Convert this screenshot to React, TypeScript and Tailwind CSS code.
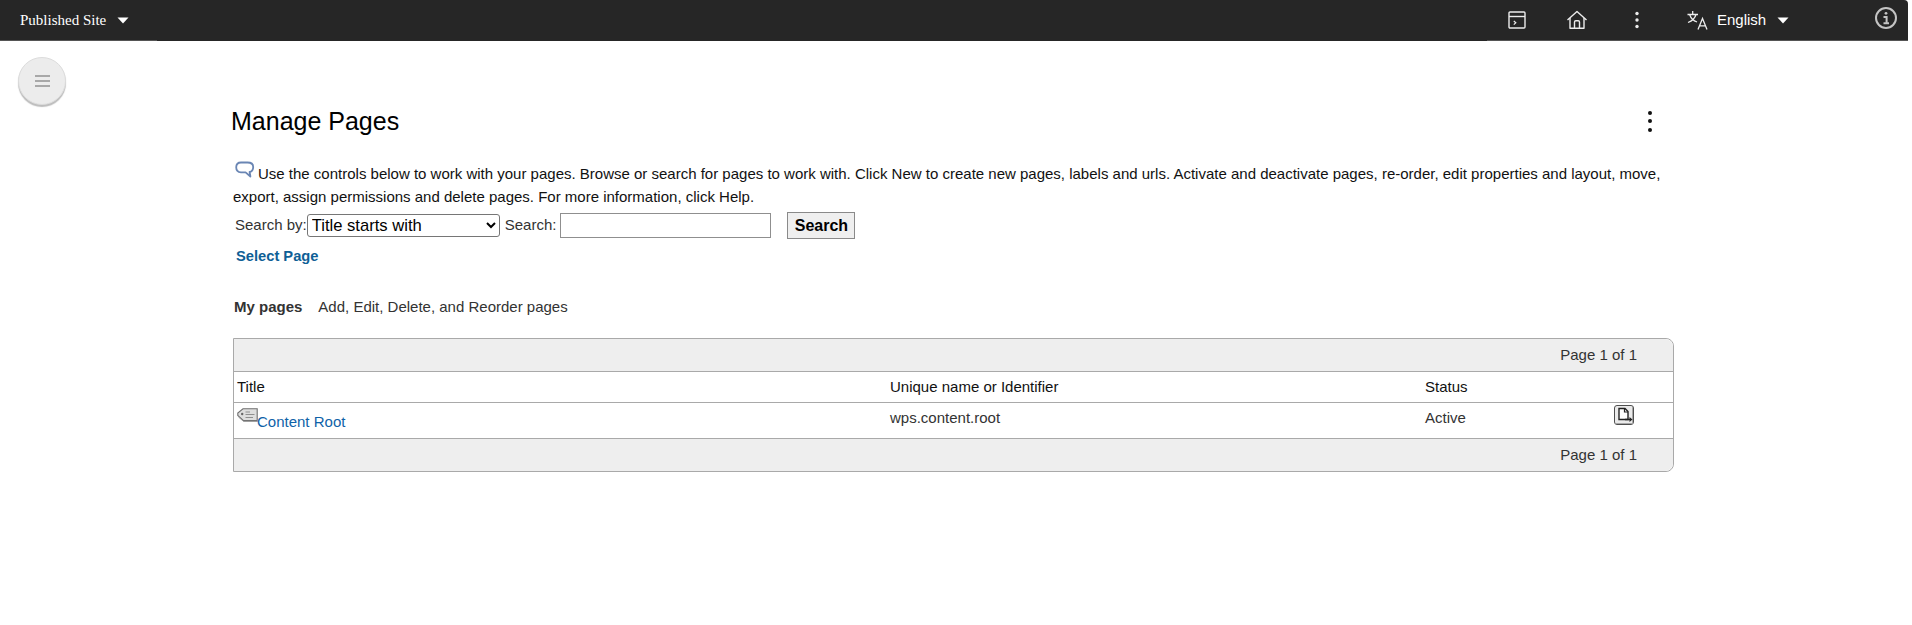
import React from "react";

const sans = "font-['Liberation_Sans',Arial,sans-serif]";

function Comment() {
  return (
    <svg width="20" height="19" viewBox="0 0 20 19" className="absolute left-[4px] top-[-1px]" fill="none">
      <path d="M6 1.5 H12.5 Q18.2 1.5 18.2 6 Q18.2 10.4 14.6 11 L15.4 15.5 L10.6 11.4 H6 Q1.2 11 1.2 6.2 Q1.2 1.5 6 1.5 Z" stroke="#6a86b4" strokeWidth="1.8" strokeLinejoin="round" />
    </svg>
  );
}

function TagIcon() {
  return (
    <svg width="21" height="14" viewBox="0 0 21 14" className="shrink-0">
      <path d="M6 0.8 H20.2 V12.6 H6.5 L0.8 7.5 V5 Z" fill="#dedede" stroke="#6f6f6f" strokeWidth="1.1" />
      <path d="M1.5 9 L6.5 13.4 H20.8" fill="none" stroke="#9a9a9a" strokeWidth="1" />
      <circle cx="5.2" cy="6" r="1.2" fill="#666" />
      <path d="M8.5 4 H13 M8.5 6.5 H17.5 M8.5 9.5 H16" stroke="#8f8f8f" strokeWidth="1.1" />
    </svg>
  );
}

function MoveIcon() {
  return (
    <svg width="21" height="20" viewBox="0 0 21 20">
      <rect x="0.5" y="0.5" width="19" height="19" rx="2.5" fill="#ebebeb" stroke="#4f4f4f" />
      <path d="M1.5 18.5 H18.5 V2" fill="none" stroke="#a8a8a8" strokeWidth="1" />
      <path d="M5 3.5 H11 L14 6.5 V14.5 H5 Z" fill="#fff" stroke="#222" strokeWidth="1.4" />
      <path d="M10.5 3.5 V7 H14" fill="none" stroke="#222" strokeWidth="1.2" />
      <path d="M11 14.5 H16" stroke="#222" strokeWidth="1.5" />
      <path d="M15.5 12 L18.5 14.5 L15.5 17 Z" fill="#222" />
    </svg>
  );
}

function PageBar({ last }: { last?: boolean }) {
  return (
    <div className={`flex items-center justify-end h-[33px] pr-[36px] bg-[#eeeeee] text-[15px] text-[#333333] ${last ? "border-t border-[#a9a9a9] rounded-br-[8px]" : "border-b border-[#a9a9a9] rounded-tr-[8px]"}`}>
      Page 1 of 1
    </div>
  );
}

export default function App() {
  return (
    <div className={`${sans} relative w-[1912px] h-[625px] overflow-hidden bg-white`}>
      <header className="h-[41px] w-[1908px] rounded-tr-[4px] bg-[#262626] flex items-center text-white">
        <div className="flex items-center pl-[20px] w-[157px] h-full border-b border-[#555555]">
          <span className="font-['Liberation_Serif',serif] text-[15px]">Published Site</span>
          <svg width="12" height="7" viewBox="0 0 12 7" className="ml-[11px]"><path d="M0.5 0.5 H11.5 L6 6.5 Z" fill="#fff" /></svg>
        </div>
        <div className="flex-1" />
        <div className="flex items-center h-full w-[421px] relative border-b border-[#555555]">
          <svg width="20" height="20" viewBox="0 0 20 20" className="ml-[20px]" fill="none" stroke="#ececec" strokeWidth="1.4">
            <rect x="2" y="2" width="16" height="16" rx="1" />
            <path d="M2 6.5 H18" />
            <path d="M6.8 11 L8.8 12.8 L6.8 14.6" strokeWidth="1.2" />
          </svg>
          <svg width="22" height="20" viewBox="0 0 22 20" className="ml-[39px]" fill="none" stroke="#ececec" strokeWidth="1.4" strokeLinejoin="round">
            <path d="M1.5 10 L11 1.5 L20.5 10" />
            <path d="M4 8 V18.2 H18 V8" />
            <path d="M8.5 18.2 V12 Q8.5 10.8 9.8 10.8 H12.2 Q13.5 10.8 13.5 12 V18.2" />
          </svg>
          <svg width="4" height="18" viewBox="0 0 4 18" className="ml-[47px]" fill="#ececec">
            <circle cx="2" cy="2.5" r="1.7" /><circle cx="2" cy="9" r="1.7" /><circle cx="2" cy="15.5" r="1.7" />
          </svg>
          <svg width="21" height="20" viewBox="0 0 21 20" className="ml-[48px] -mt-[1px]" fill="none" stroke="#ececec" strokeWidth="1.3">
            <path d="M0.5 4.5 H11 M5.7 1 V4.5 M9 4.5 Q7.5 10 1 12.5 M2.8 5 Q4.5 10 10 12" />
            <path d="M11 19.5 L15.5 8.5 L20 19.5 M12.6 15.8 H18.4" />
          </svg>
          <span className="ml-[9px] text-[15px]">English</span>
          <svg width="12" height="7" viewBox="0 0 12 7" className="ml-[11px]"><path d="M0.5 0.5 H11.5 L6 6.5 Z" fill="#fff" /></svg>
          <svg width="24" height="24" viewBox="0 0 24 24" className="absolute left-[387px] top-[6px]" fill="none" stroke="#c4c4c4" strokeWidth="2">
            <circle cx="12" cy="12" r="10" />
            <circle cx="12" cy="7.3" r="1.4" fill="#c4c4c4" stroke="none" />
            <path d="M9.5 11 H12.6 V17 M9.5 17.2 H15" />
          </svg>
        </div>
      </header>

      <button className="absolute left-[18px] top-[57px] w-[48px] h-[48px] rounded-full bg-[#ececec] border border-[#dcdcdc] shadow-[0_2px_1px_#bdbdbd] flex flex-col items-center justify-center gap-[3px]">
        <span className="block w-[15px] h-[2px] bg-[#a8a8a8]" />
        <span className="block w-[15px] h-[2px] bg-[#a8a8a8]" />
        <span className="block w-[15px] h-[2px] bg-[#a8a8a8]" />
      </button>

      <main className="pl-[231px] w-[1680px] pt-[65px]">
        <div className="flex items-center justify-between h-[30px] pr-[27px]">
          <h1 className="text-[25px] leading-[30px] text-black">Manage Pages</h1>
          <svg width="6" height="22" viewBox="0 0 6 22" fill="#111">
            <circle cx="3" cy="3" r="2" /><circle cx="3" cy="11" r="2" /><circle cx="3" cy="20" r="2" />
          </svg>
        </div>

        <p className="relative mt-[26px] pl-[2px] w-[1440px] text-[15px] leading-[23px] text-[#111111] indent-[25px]">
          <Comment />Use the controls below to work with your pages. Browse or search for pages to work with. Click New to create new pages, labels and urls. Activate and deactivate pages, re-order, edit properties and layout, move, export, assign permissions and delete pages. For more information, click Help.
        </p>

        <div className="flex items-center mt-[4px] pl-[4px] h-[27px] text-[15px] text-[#333333]">
          <label>Search by:</label>
          <select className="w-[193px] h-[23px] border border-[#767676] rounded-[3px] bg-white text-[16.6px] text-black appearance-auto" defaultValue="t">
            <option value="t">Title starts with</option>
          </select>
          <label className="ml-[5px]">Search:</label>
          <input className="ml-[4px] w-[211px] h-[25px] border border-[#8f8f8f] bg-white" />
          <button className="ml-[16px] w-[68px] h-[27px] border border-[#8a8a8a] bg-[#efefef] text-[16px] font-bold text-black">Search</button>
        </div>

        <a className="block mt-[9px] ml-[5px] text-[14.7px] leading-[17px] font-bold text-[#0f5f96]">Select Page</a>

        <div className="flex mt-[32px] ml-[3px] text-[15px] leading-[20px] text-[#333333]">
          <b>My pages</b>
          <span className="ml-[16px]">Add, Edit, Delete, and Reorder pages</span>
        </div>

        <section className="mt-[21px] ml-[2px] w-[1441px] border border-[#a9a9a9] rounded-tr-[8px] rounded-br-[8px] text-[15px]">
          <PageBar />
          <div className="grid grid-cols-[653px_535px_1fr] h-[31px] items-center border-b border-[#a9a9a9] pl-[3px] text-[#111111]">
            <span>Title</span>
            <span>Unique name or Identifier</span>
            <span>Status</span>
          </div>
          <div className="grid grid-cols-[653px_535px_189px_1fr] h-[35px] pl-[3px] text-[#333333]">
            <span className="flex items-start pt-[5px] text-[#0f62a8]">
              <TagIcon />
              <span className="mt-[3px] -ml-[1px]">Content Root</span>
            </span>
            <span className="pt-[4px]">wps.content.root</span>
            <span className="pt-[4px]">Active</span>
            <span className="pt-[2px]"><MoveIcon /></span>
          </div>
          <PageBar last />
        </section>
      </main>
    </div>
  );
}
